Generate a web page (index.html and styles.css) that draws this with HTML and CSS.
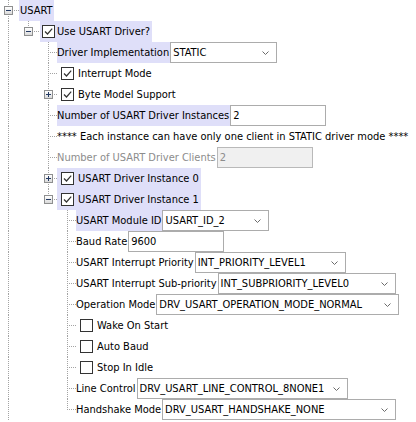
FILE: index.html
```html
<!DOCTYPE html>
<html>
<head>
<meta charset="utf-8">
<link rel="stylesheet" href="styles.css">
</head>
<body>
<div class="tree">
  <div class="row">
    <span class="c l1 tee"><span class="exp"></span></span>
    <span class="lbl hl first">USART</span>
  </div>
  <div class="row">
    <span class="c l1 pass"></span>
    <span class="c l2 end"><span class="exp"></span></span>
    <span class="item hl top"><span class="cb on"><svg viewBox="0 0 11 11" width="11" height="11"><path d="M2 5.5 4.5 8 9.2 2.6"/></svg></span>Use USART Driver?</span>
  </div>
  <div class="row">
    <span class="c l1 pass"></span><span class="c l2"></span>
    <span class="c l3 tee"></span>
    <span class="lbl hl">Driver Implementation</span>
    <span class="combo w107"><span>STATIC</span><svg class="chev" width="7" height="4"><path d="M0.5 0.5 3.5 3.5 6.5 0.5"/></svg></span>
  </div>
  <div class="row">
    <span class="c l1 pass"></span><span class="c l2"></span>
    <span class="c l3 tee"></span>
    <span class="item"><span class="cb on"><svg viewBox="0 0 11 11" width="11" height="11"><path d="M2 5.5 4.5 8 9.2 2.6"/></svg></span>Interrupt Mode</span>
  </div>
  <div class="row">
    <span class="c l1 pass"></span><span class="c l2"></span>
    <span class="c l3 tee"><span class="exp plus"></span></span>
    <span class="item"><span class="cb on"><svg viewBox="0 0 11 11" width="11" height="11"><path d="M2 5.5 4.5 8 9.2 2.6"/></svg></span>Byte Model Support</span>
  </div>
  <div class="row">
    <span class="c l1 pass"></span><span class="c l2"></span>
    <span class="c l3 tee"></span>
    <span class="lbl hl">Number of USART Driver Instances</span>
    <span class="field">2</span>
  </div>
  <div class="row">
    <span class="c l1 pass"></span><span class="c l2"></span>
    <span class="c l3 tee"></span>
    <span class="lbl">**** Each instance can have only one client in STATIC driver mode ****</span>
  </div>
  <div class="row">
    <span class="c l1 pass"></span><span class="c l2"></span>
    <span class="c l3 tee"></span>
    <span class="lbl off">Number of USART Driver Clients</span>
    <span class="field disabled">2</span>
  </div>
  <div class="row">
    <span class="c l1 pass"></span><span class="c l2"></span>
    <span class="c l3 tee"><span class="exp plus"></span></span>
    <span class="item hl"><span class="cb on"><svg viewBox="0 0 11 11" width="11" height="11"><path d="M2 5.5 4.5 8 9.2 2.6"/></svg></span>USART Driver Instance 0</span>
  </div>
  <div class="row">
    <span class="c l1 pass"></span><span class="c l2"></span>
    <span class="c l3 end"><span class="exp"></span></span>
    <span class="item hl"><span class="cb on"><svg viewBox="0 0 11 11" width="11" height="11"><path d="M2 5.5 4.5 8 9.2 2.6"/></svg></span>USART Driver Instance 1</span>
  </div>
  <div class="row">
    <span class="c l1 pass"></span><span class="c l2"></span><span class="c l3"></span>
    <span class="c l4 tee"></span>
    <span class="lbl hl">USART Module ID</span>
    <span class="combo w107"><span>USART_ID_2</span><svg class="chev" width="7" height="4"><path d="M0.5 0.5 3.5 3.5 6.5 0.5"/></svg></span>
  </div>
  <div class="row">
    <span class="c l1 pass"></span><span class="c l2"></span><span class="c l3"></span>
    <span class="c l4 tee"></span>
    <span class="lbl">Baud Rate</span>
    <span class="field">9600</span>
  </div>
  <div class="row">
    <span class="c l1 pass"></span><span class="c l2"></span><span class="c l3"></span>
    <span class="c l4 tee"></span>
    <span class="lbl">USART Interrupt Priority</span>
    <span class="combo w151"><span>INT_PRIORITY_LEVEL1</span><svg class="chev" width="7" height="4"><path d="M0.5 0.5 3.5 3.5 6.5 0.5"/></svg></span>
  </div>
  <div class="row">
    <span class="c l1 pass"></span><span class="c l2"></span><span class="c l3"></span>
    <span class="c l4 tee"></span>
    <span class="lbl">USART Interrupt Sub-priority</span>
    <span class="combo w178"><span>INT_SUBPRIORITY_LEVEL0</span><svg class="chev" width="7" height="4"><path d="M0.5 0.5 3.5 3.5 6.5 0.5"/></svg></span>
  </div>
  <div class="row">
    <span class="c l1 pass"></span><span class="c l2"></span><span class="c l3"></span>
    <span class="c l4 tee"></span>
    <span class="lbl">Operation Mode</span>
    <span class="combo w243"><span>DRV_USART_OPERATION_MODE_NORMAL</span><svg class="chev" width="7" height="4"><path d="M0.5 0.5 3.5 3.5 6.5 0.5"/></svg></span>
  </div>
  <div class="row">
    <span class="c l1 pass"></span><span class="c l2"></span><span class="c l3"></span>
    <span class="c l4 tee"></span>
    <span class="item"><span class="cb"></span>Wake On Start</span>
  </div>
  <div class="row">
    <span class="c l1 pass"></span><span class="c l2"></span><span class="c l3"></span>
    <span class="c l4 tee"></span>
    <span class="item"><span class="cb"></span>Auto Baud</span>
  </div>
  <div class="row">
    <span class="c l1 pass"></span><span class="c l2"></span><span class="c l3"></span>
    <span class="c l4 tee"></span>
    <span class="item"><span class="cb"></span>Stop In Idle</span>
  </div>
  <div class="row">
    <span class="c l1 pass"></span><span class="c l2"></span><span class="c l3"></span>
    <span class="c l4 tee"></span>
    <span class="lbl">Line Control</span>
    <span class="combo w211"><span>DRV_USART_LINE_CONTROL_8NONE1</span><svg class="chev" width="7" height="4"><path d="M0.5 0.5 3.5 3.5 6.5 0.5"/></svg></span>
  </div>
  <div class="row">
    <span class="c l1 pass"></span><span class="c l2"></span><span class="c l3"></span>
    <span class="c l4 end"></span>
    <span class="lbl">Handshake Mode</span>
    <span class="combo w234"><span>DRV_USART_HANDSHAKE_NONE</span><svg class="chev" width="7" height="4"><path d="M0.5 0.5 3.5 3.5 6.5 0.5"/></svg></span>
  </div>
</div>
</body>
</html>
```
FILE: styles.css
```css
html, body {
  margin: 0;
  padding: 0;
  background: #ffffff;
}
body {
  font-family: "DejaVu Sans Condensed", "DejaVu Sans", sans-serif;
  font-size: 11px;
  color: #000000;
  overflow: hidden;
}
.tree {
  display: flex;
  flex-direction: column;
}
.row {
  display: flex;
  align-items: center;
  height: 21px;
  white-space: nowrap;
}
.c {
  --dot: #a3a3a3;
  --dv: repeating-linear-gradient(to bottom, var(--dot) 0 1px, transparent 1px 2px);
  --dh: repeating-linear-gradient(to right, var(--dot) 0 1px, transparent 1px 2px);
  flex: none;
  width: var(--w);
  height: 21px;
  display: flex;
  align-items: center;
  background-repeat: no-repeat;
}
.l1 { --w: 19px; --x: 8px; }
.l2 { --w: 21px; --x: 9px; }
.l3 { --w: 17px; --x: 8px; }
.l4 { --w: 19px; --x: 10px; }
.pass {
  background-image: var(--dv);
  background-size: 1px 100%;
  background-position: var(--x) 0;
}
.tee {
  background-image: var(--dv), var(--dh);
  background-size: 1px 100%, calc(var(--w) - var(--x)) 1px;
  background-position: var(--x) 0, var(--x) 10px;
}
.end {
  background-image: var(--dv), var(--dh);
  background-size: 1px 11px, calc(var(--w) - var(--x)) 1px;
  background-position: var(--x) 0, var(--x) 10px;
}
.exp {
  position: relative;
  flex: none;
  box-sizing: border-box;
  width: 9px;
  height: 9px;
  margin-left: calc(var(--x) - 4px);
  border: 1px solid #8e8f8f;
  background: linear-gradient(#ffffff, #dadada);
}
.exp::before {
  content: "";
  position: absolute;
  left: 1px;
  top: 3px;
  width: 5px;
  height: 1px;
  background: #243a63;
}
.exp.plus::after {
  content: "";
  position: absolute;
  left: 3px;
  top: 1px;
  width: 1px;
  height: 5px;
  background: #243a63;
}
.lbl {
  height: 21px;
  line-height: 21px;
  padding: 0 1px 0 0;
}
.lbl.first {
  padding-left: 1px;
}
.hl {
  background: #dfdff9;
}
.off {
  color: #8c8c8c;
}
.item {
  display: flex;
  align-items: center;
  gap: 4px;
  height: 21px;
  padding: 0 2px 0 4px;
}
.item.top {
  gap: 2px;
  padding-left: 2px;
}
.cb {
  flex: none;
  box-sizing: border-box;
  width: 13px;
  height: 13px;
  border: 1px solid #333333;
  background: #ffffff;
  display: flex;
}
.cb svg path {
  fill: none;
  stroke: #333333;
  stroke-width: 1.2;
}
.combo {
  flex: none;
  box-sizing: border-box;
  height: 21px;
  margin-left: 0;
  padding: 0 7px 0 2px;
  border: 1px solid #acacac;
  background: #ffffff;
  display: flex;
  align-items: center;
  justify-content: space-between;
}
.chev path {
  fill: none;
  stroke: #6b6b6b;
  stroke-width: 1;
}
.w107 { width: 107px; }
.w151 { width: 151px; }
.w178 { width: 178px; }
.w211 { width: 211px; }
.w234 { width: 234px; }
.w243 { width: 243px; }
.field {
  flex: none;
  box-sizing: border-box;
  width: 96px;
  height: 21px;
  line-height: 19px;
  margin-left: 0;
  padding: 0 2px;
  border: 1px solid #acacac;
  background: #ffffff;
}
.field.disabled {
  background: #f0f0f0;
  color: #8c8c8c;
  border-color: #b9b9b9;
}
```
